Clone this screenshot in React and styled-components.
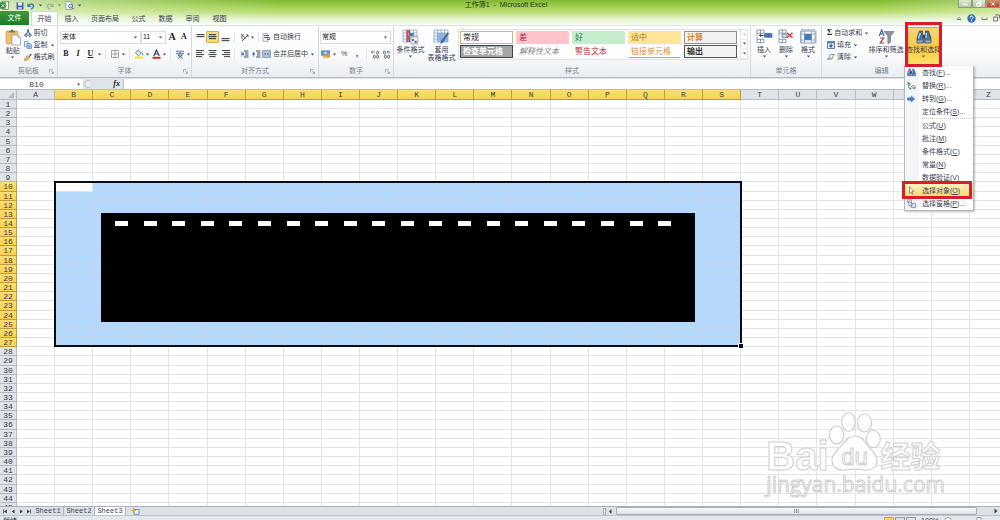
import React from 'react';
import styled, { createGlobalStyle } from 'styled-components';

const COLUMNS = 'ABCDEFGHIJKLMNOPQRSTUVWXYZ'.split('');
const ROWS = Array.from({ length: 45 }, (_, i) => i + 1);
const MARKS = Array.from({ length: 20 }, (_, i) => i);

const isColSelected = (index) => index >= 1 && index <= 18;
const isRowSelected = (row) => row >= 10 && row <= 27;

const GlobalStyle = createGlobalStyle`
  * { box-sizing: border-box; }
  body {
    margin: 0;
    overflow: hidden;
    background: white;
  }
  body, button, input, select {
    font-family: "Liberation Sans", "Noto Sans CJK SC", sans-serif;
    font-size: 7px;
    line-height: 8px;
    color: #3c4350;
  }
  button {
    border: 0;
    padding: 0;
    background: none;
    cursor: pointer;
  }
  svg { display: block; flex: none; }
`;

const Page = styled.div`
  display: flex;
  flex-direction: column;
  height: 100vh;
  overflow: hidden;
`;

const Chrome = styled.header`
  background:
    linear-gradient(90deg, rgba(255, 255, 255, 0.6) 0%, rgba(255, 255, 255, 0.35) 10%, rgba(255, 255, 255, 0) 28%, rgba(255, 255, 255, 0) 88%, rgba(255, 255, 255, 0.35) 100%),
    linear-gradient(180deg, #80b734 0%, #92c744 16%, #a9d45a 34%, #bfe07f 52%, #e3f2cb 74%, #fafdf6 100%);
`;

const TitleBar = styled.div`
  display: grid;
  grid-template-columns: 1fr auto 1fr;
  height: 11px;
`;

const QuickAccess = styled.div`
  display: flex;
  align-items: center;
  gap: 3px;
`;

const Title = styled.h1`
  margin: 0;
  padding-left: 12px;
  font-size: 7px;
  line-height: 10px;
  font-weight: 400;
  color: #26321a;
  white-space: pre;
`;

const WindowButtons = styled.div`
  display: flex;
  justify-content: flex-end;
  align-items: flex-start;
`;

const WindowButton = styled.button`
  width: 14px;
  height: 8px;
  display: flex;
  align-items: center;
  justify-content: center;
  border: 1px solid #8c9c86;
  border-top: 0;
  background: ${(p) => (p.$close ? 'linear-gradient(#e08a6c, #c63d20)' : 'linear-gradient(#dce9cd, #b5c6a6)')};
`;

const TabBar = styled.nav`
  display: flex;
  align-items: stretch;
  height: 14px;
`;

const FileTab = styled.button`
  width: 29px;
  border-radius: 0 2px 0 0;
  color: white;
  background: linear-gradient(#3e9a3b, #1c7a28);
`;

const Tab = styled.button`
  min-width: ${(p) => p.$width || 27}px;
  text-align: center;
  border: 1px solid ${(p) => (p.$active ? '#cfd8d4' : 'transparent')};
  border-bottom: 0;
  border-radius: 2px 2px 0 0;
  background: ${(p) => (p.$active ? 'white' : 'transparent')};
  ${(p) => p.$active && 'margin-left: 2px;'}
`;

const TabTools = styled.div`
  display: flex;
  align-items: center;
  gap: 5px;
  margin-left: auto;
`;

const Ribbon = styled.section`
  position: relative;
  z-index: 3;
  display: flex;
  height: 53px;
  background: linear-gradient(#ffffff 0%, #fafbfc 55%, #e9edf1 100%);
  border-top: 1px solid #dde3e6;
  border-bottom: 1px solid #b3bac2;
`;

const GroupBox = styled.div`
  flex: none;
  display: flex;
  flex-direction: column;
  width: ${(p) => p.$width}px;
  padding-top: 1px;
  border-right: 1px solid #d3d9e0;
`;

const GroupBody = styled.div`
  flex: 1;
  display: flex;
  align-items: flex-start;
  padding: 0 ${(p) => p.$pad || 2}px;
`;

const GroupLabel = styled.div`
  position: relative;
  height: 11px;
  line-height: 10px;
  text-align: center;
  color: #79828f;
`;

const Launcher = styled.svg`
  position: absolute;
  right: 3px;
  top: 3px;
`;

const BigButton = styled.button`
  display: flex;
  flex-direction: column;
  align-items: center;
  gap: 1px;
  width: ${(p) => p.$width}px;
  height: 39px;
  padding-top: 2px;
  white-space: nowrap;
  border-radius: 2px;
  ${(p) => p.$active && 'background: linear-gradient(#f7d777, #fbc93f 55%, #ffe26c); border: 1px solid #d3a442; padding-top: 1px;'}
`;

const Stack = styled.div`
  display: flex;
  flex-direction: column;
  gap: ${(p) => p.$gap || 0}px;
  padding-top: ${(p) => p.$top || 0}px;
  width: ${(p) => p.$width}px;
`;

const Line = styled.div`
  display: flex;
  align-items: center;
  height: 14px;
`;

const SmallButton = styled.button`
  display: flex;
  align-items: center;
  gap: 2px;
  height: 12px;
  white-space: nowrap;
`;

const ToolButton = styled.button`
  display: flex;
  align-items: center;
  justify-content: center;
  width: ${(p) => p.$width || 12}px;
  height: 12px;
  border: 1px solid ${(p) => (p.$active ? '#d6ab48' : 'transparent')};
  border-radius: 1px;
  background: ${(p) => (p.$active ? '#fbdb73' : 'none')};
`;

const Glyph = styled.span`
  font-family: "Liberation Serif", serif;
  font-size: ${(p) => p.$size || 8}px;
  line-height: 10px;
  font-weight: 700;
  font-style: ${(p) => (p.$italic ? 'italic' : 'normal')};
  text-decoration: ${(p) => (p.$underline ? 'underline' : 'none')};
  color: #222;
`;

const Divider = styled.span`
  width: 1px;
  height: 10px;
  margin: 0 ${(p) => (p.$tight ? 0 : 3)}px;
  background: #e0e3e8;
`;

const Picker = styled.div`
  display: flex;
  align-items: center;
  width: ${(p) => p.$width}px;
  height: 13px;
  padding-right: 2px;
  border: 1px solid #d8dde4;
  background: white;

  select {
    flex: 1;
    min-width: 0;
    appearance: none;
    border: 0;
    padding: 0 1px;
    background: none;
    color: #222;
  }
`;

const Gallery = styled.div`
  display: flex;
  margin-top: 2px;
  border: 1px solid #dfe3e8;
  background: white;
`;

const StyleGrid = styled.div`
  display: grid;
  grid-template-columns: repeat(5, 53px);
  grid-auto-rows: 13px;
  gap: 1px 3px;
  padding: 1px 3px 1px 1px;
`;

const StyleCell = styled.button`
  padding: 0 2px;
  font-size: 8px;
  line-height: 10px;
  text-align: left;
  white-space: nowrap;
  overflow: hidden;
  color: ${(p) => p.$color};
  background: ${(p) => p.$bg || 'white'};
  border: ${(p) => p.$border || '1px solid transparent'};
  border-bottom: ${(p) => p.$underline};
  font-weight: ${(p) => (p.$bold ? 700 : 400)};
  font-style: ${(p) => (p.$italic ? 'italic' : 'normal')};
`;

const GalleryScroll = styled.div`
  display: grid;
  grid-template-rows: repeat(3, 1fr);
  width: 7px;

  button {
    display: flex;
    align-items: center;
    justify-content: center;
    border-left: 1px solid #dfe3e8;
    border-bottom: 1px solid #e6e9ed;
  }
`;

const FindWrap = styled.div`
  position: relative;
  margin-left: 4px;
`;

const RedFrame = styled.span`
  position: absolute;
  inset: ${(p) => p.$inset};
  border: 3px solid #d81e2a;
  pointer-events: none;
`;

const Menu = styled.div`
  position: absolute;
  top: 39px;
  left: -3px;
  width: 70px;
  border: 1px solid #b4b8be;
  border-top: 0;
  background: linear-gradient(90deg, #f4f5f7 0, #f4f5f7 14px, white 14px);
  box-shadow: 1px 1px 2px rgba(0, 0, 0, 0.25);
`;

const MenuItem = styled.button`
  position: relative;
  display: grid;
  grid-template-columns: 17px 1fr;
  align-items: center;
  width: 100%;
  height: 13px;
  text-align: left;
  white-space: nowrap;
  background: ${(p) => (p.$active ? 'linear-gradient(#fdf0bd, #f9d875)' : 'none')};

  svg { margin-left: 2px; }
`;

const MenuRule = styled.div`
  height: 1px;
  margin-left: 17px;
  border-top: 1px dotted #c9ccd0;
`;

const FormulaBar = styled.div`
  display: flex;
  align-items: center;
  height: 12px;
  padding-top: 1px;
  background: #dfe4ea;
  border-bottom: 1px solid #b4bcc6;

  input {
    height: 10px;
    border: 0;
    padding: 0;
    background: white;
    outline: 0;
  }
`;

const NameInput = styled.input`
  width: 73px;
  text-align: center;
  font-family: "Liberation Mono", monospace;
  font-size: 8px;
`;

const NameArrow = styled.button`
  display: flex;
  align-items: center;
  justify-content: center;
  width: 10px;
  height: 10px;
  background: white;
`;

const FunctionArea = styled.div`
  display: flex;
  align-items: center;
  justify-content: space-between;
  width: 41px;
  height: 10px;
  padding: 0 3px 0 1px;
  border-right: 1px solid #b9c0c9;
`;

const FormulaInput = styled.input`
  flex: 1;
`;

const GridArea = styled.main`
  position: relative;
  flex: 1;
  min-height: 0;
  overflow: hidden;
`;

/* 26 equal columns, the last one runs slightly past the window edge */
const Sheet = styled.table`
  display: block;
  width: calc(100% + 8px);
  font-family: "Liberation Mono", monospace;
  font-size: 8px;
  line-height: 9px;

  thead, tbody { display: grid; }
  tbody {
    height: 412px;
    grid-template-rows: repeat(45, minmax(0, 1fr));
  }
  tr {
    display: grid;
    grid-template-columns: 17px repeat(26, minmax(0, 1fr));
  }
  thead tr { height: 10px; }
  th, td { padding: 0; overflow: hidden; }
`;

const HeadCell = styled.th`
  font-weight: 400;
  color: #3b4048;
  background: ${(p) => (p.$selected ? 'linear-gradient(#fbdf72, #f8d254)' : '#dfe3e8')};
  border-right: 1px solid ${(p) => (p.$selected ? '#c79a35' : '#b3bac3')};
  border-bottom: 1px solid ${(p) => (p.$selected ? '#c79a35' : '#b3bac3')};
`;

const Cell = styled.td`
  border-right: 1px solid ${(p) => (p.$selected ? '#c3d7ea' : '#e2e4e7')};
  border-bottom: 1px solid ${(p) => (p.$selected ? '#c3d7ea' : '#e2e4e7')};
  background: ${(p) => (p.$selected ? '#b5d9fe' : 'white')};
`;

const Overlay = styled.div`
  position: absolute;
  top: 10px;
  left: 0;
  display: grid;
  width: calc(100% + 8px);
  height: 412px;
  grid-template-columns: 17px repeat(26, minmax(0, 1fr));
  grid-template-rows: repeat(45, minmax(0, 1fr));
  pointer-events: none;
`;

const Selection = styled.div`
  position: relative;
  grid-column: 3 / 21;
  grid-row: 10 / 28;
  margin: -1px -1px 0 -1px;
  border: 2px solid #0b0d10;

  &::after {
    content: '';
    position: absolute;
    right: -3px;
    bottom: -3px;
    width: 4px;
    height: 4px;
    border: solid white;
    border-width: 1px 0 0 1px;
    background: #0b0d10;
  }
`;

const Shape = styled.div`
  position: absolute;
  left: 45px;
  right: 45px;
  top: 30px;
  bottom: 23px;
  display: flex;
  justify-content: space-between;
  align-items: flex-start;
  padding: 8px 24px 0 14px;
  background: black;
`;

const Mark = styled.span`
  width: 13px;
  height: 5px;
  background: white;
`;

const Watermark = styled.div`
  position: absolute;
  right: 55px;
  bottom: 8px;
  font-weight: 700;
  color: white;
  -webkit-text-stroke: 1px #cfcfcf;
  pointer-events: none;
`;

const MarkTop = styled.div`
  display: flex;
  align-items: flex-end;
  height: 60px;
  font-size: 40px;
  line-height: 30px;
`;

const Paw = styled.div`
  position: relative;
  display: flex;
  justify-content: center;
  width: 52px;
  height: 60px;
  font-size: 24px;
  line-height: 24px;

  svg { position: absolute; inset: 0; }
  span { position: relative; margin-top: 34px; font-weight: 400; }
`;

const Cjk = styled.span`
  font-family: "Noto Sans CJK SC", sans-serif;
  font-size: 30px;
  line-height: 34px;
`;

const MarkUrl = styled.div`
  font-family: "Open Sans", sans-serif;
  font-size: 21px;
  line-height: 27px;
  font-weight: 400;
`;

const SheetBar = styled.footer`
  display: flex;
  align-items: stretch;
  height: 9px;
  border-top: 1px solid #aab1ba;
  background: #dce1e7;
`;

const SheetNav = styled.div`
  display: flex;
  align-items: center;
  justify-content: space-around;
  width: 33px;
`;

const SheetTab = styled.button`
  width: 31px;
  line-height: 7px;
  font-family: "Liberation Mono", monospace;
  border-right: 1px solid #aab1ba;
  background: ${(p) => (p.$active ? 'white' : 'transparent')};
`;

const NewSheet = styled.button`
  display: flex;
  align-items: center;
  padding: 0 5px;
`;

const Scroll = styled.div`
  display: flex;
  align-items: center;
  flex: none;
  width: 40%;
  margin-left: auto;
  gap: 4px;
  padding: 0 2px 0 3px;
`;

const Thumb = styled.div`
  flex: 1;
  height: 8px;
  margin-right: 13px;
  display: flex;
  align-items: center;
  justify-content: center;
  border: 1px solid #a8afb9;
  border-radius: 1px;
  background: linear-gradient(#f7f8fa, #dde1e6);
`;

const Status = styled.div`
  display: flex;
  justify-content: space-between;
  height: 5px;
  padding: 1px 4px 0 3px;
  overflow: hidden;
  background: #e4e8ec;
  border-top: 1px solid #bcc3cb;
`;

const StatusRight = styled.div`
  display: flex;
  gap: 5px;
`;

const Views = styled.div`
  display: flex;
  gap: 1px;
`;

const ViewButton = styled.button`
  width: 10px;
  height: 8px;
  border: 1px solid ${(p) => (p.$active ? '#cfa43c' : '#949ba5')};
  background: ${(p) => (p.$active ? '#f9d55d' : '#dfe3e8')};
`;

const Arrow = ({ color = '#555' }) => (
  <svg width="5" height="3" viewBox="0 0 5 3"><path d="M.8.4h3.4L2.5 2.5z" fill={color} /></svg>
);

const Bars = ({ widths, top = 1 }) => (
  <svg width="9" height="10" viewBox="0 0 9 10">
    {widths.map((w, i) => (
      <rect key={i} x={(9 - w) / 2} y={top + i * 2} width={w} height="1.2" fill="#4a4f57" />
    ))}
  </svg>
);

const AlignIcon = ({ side }) => (
  <svg width="9" height="10" viewBox="0 0 9 10" fill="#4a4f57">
    {[8, 6, 8, 6].map((w, i) => (
      <rect key={i} x={side === 'left' ? 0 : side === 'right' ? 9 - w : (9 - w) / 2} y={1 + i * 2} width={w} height="1.1" />
    ))}
  </svg>
);

const PasteIcon = () => (
  <svg width="16" height="17" viewBox="0 0 16 17">
    <rect x="1" y="2" width="12" height="13" rx="1" fill="#edc06a" stroke="#c99547" strokeWidth=".6" />
    <path d="M4 3.5V2h1.5L6 .6h2L8.6 2H10v1.5z" fill="#6f7780" />
    <path d="M7 6h6l2.5 2.5V16H7z" fill="#f7f9fc" stroke="#8795ac" strokeWidth=".7" />
    <path d="M13 6v2.5h2.5" fill="none" stroke="#8795ac" strokeWidth=".6" />
  </svg>
);

const CutIcon = () => (
  <svg width="8" height="8" viewBox="0 0 8 8" fill="none" stroke="#2f5487" strokeWidth="1">
    <path d="M4.6.4 2.6 5M3.6.4l2 4.6" /><circle cx="2" cy="6.2" r="1.2" /><circle cx="6" cy="6.2" r="1.2" />
  </svg>
);

const CopyIcon = () => (
  <svg width="8" height="8" viewBox="0 0 8 8" stroke="#5682b6" strokeWidth=".7">
    <path d="M.5.6h3l1 1v4h-4z" fill="#e8f1fb" /><path d="M3 2.6h3.3l1.2 1.2v3.7H3z" fill="#b8d2ee" /><path d="M4 4.8h2.4M4 6.1h2.4" />
  </svg>
);

const BrushIcon = () => (
  <svg width="8" height="8" viewBox="0 0 8 8">
    <path d="M4.4 3.5 7 .6l.8.8-2.6 2.8z" fill="#4a4c52" /><path d="m3.3 2.7 2.4 2.2-2 2.2L.3 7.5l.5-1.7z" fill="#eeb94b" stroke="#99712b" strokeWidth=".5" />
  </svg>
);

const SaveIcon = () => (
  <svg width="8" height="8" viewBox="0 0 8 8"><path d="M.5.5h7v7h-7z" fill="#3f62a4" /><path d="M2 .5h4v3H2z" fill="#e6eefa" /><path d="M2.2 5h3.6v2.5H2.2z" fill="#b8c5da" /></svg>
);

const UndoIcon = ({ flip, color = '#3674bd' }) => (
  <svg width="8" height="8" viewBox="0 0 8 8"><g transform={flip ? 'matrix(-1 0 0 1 8 0)' : undefined}><path d="M2 3.5C4 .9 7 2 6.4 4.6 6.1 6 5 6.7 4 7" fill="none" stroke={color} strokeWidth="1.4" /><path d="M.4 1.3v3.8h3.9z" fill={color} /></g></svg>
);

const PreviewIcon = () => (
  <svg width="9" height="9" viewBox="0 0 9 9"><path d="M1 .5h4l2 2v6H1z" fill="#fff" stroke="#68768a" strokeWidth=".6" /><circle cx="5.5" cy="5" r="2" fill="#cce4f5" stroke="#355d8b" strokeWidth=".8" /><path d="m7 6.5 1.6 1.8" stroke="#355d8b" /></svg>
);

const ExcelIcon = () => (
  <svg width="9" height="9" viewBox="0 0 9 9"><rect x="2.5" y=".5" width="6" height="8" fill="#f2f8ee" stroke="#4a9148" strokeWidth=".7" /><path d="M0 1.4h5.8v6.2H0z" fill="#26823a" /><path d="m1.2 2.8 3.4 3.6m0-3.6L1.2 6.4" stroke="#fff" strokeWidth=".9" /></svg>
);

const BorderIcon = () => (
  <svg width="8" height="8" viewBox="0 0 8 8" fill="none" stroke="#8a9099" strokeWidth=".8"><path d="M.5.5h7v7h-7zM4 .5v7M.5 4h7" /></svg>
);

const FillIcon = () => (
  <svg width="10" height="10" viewBox="0 0 10 10"><path d="m4 1 3.5 3L4.4 6.8 1.5 4z" fill="#dbe5f1" stroke="#4b5d78" strokeWidth=".7" /><path d="M7.5 3.5c1 .6 1.6 1.8 1.2 3" fill="none" stroke="#3472ba" /><path d="M.5 7.5h9v2h-9z" fill="#f9e52c" /></svg>
);

const PhoneticIcon = () => (
  <svg width="10" height="9" viewBox="0 0 10 9" fill="none"><path d="M1 1.2h3M6 1.2h3M1 3.3h8M5 .5v3M2.5 5h5L3 8.5M3 5l4.8 3.4" stroke="#3b5c91" strokeWidth=".9" /></svg>
);

const OrientIcon = () => (
  <svg width="9" height="9" viewBox="0 0 9 9" fill="none" stroke="#474c55" strokeWidth=".9"><path d="m1 1.5 5 4M1 4.5l3 2.6M3.5 1l-2 3M2 8l6-6M6 2h2v2" /></svg>
);

const IndentIcon = ({ out }) => (
  <svg width="9" height="9" viewBox="0 0 9 9"><path d="M4 1h4.5M5 3h3.5M5 5h3.5M4 7h4.5" stroke="#454b55" /><path d={out ? 'M3.8 2.2 1 4l2.8 1.8z' : 'M.6 2.2 3.5 4 .6 5.8z'} fill="#346db1" /><path d="M1.8 1v6" stroke="#346db1" strokeWidth=".6" /></svg>
);

const WrapIcon = () => (
  <svg width="9" height="9" viewBox="0 0 9 9" fill="none"><path d="M1 .6h4.8v7.8H1z" fill="#eef2f7" stroke="#7d8794" strokeWidth=".6" /><path d="M2 2.5h5M2 4.5h5.5v2H5" stroke="#4f5d71" strokeWidth=".9" /></svg>
);

const MergeIcon = () => (
  <svg width="9" height="8" viewBox="0 0 9 8"><path d="M.5.5h8v7h-8z" fill="#d3e2f4" stroke="#6684aa" strokeWidth=".7" /><path d="M.5 2h8M.5 6h8" stroke="#6684aa" strokeWidth=".6" /><path d="M1.3 4h2.3M5.4 4h2.3M2.8 3.1 3.9 4l-1.1.9M6.2 3.1 5.1 4l1.1.9" fill="none" stroke="#244a81" strokeWidth=".7" /></svg>
);

const MoneyIcon = () => (
  <svg width="10" height="9" viewBox="0 0 10 9"><path d="M.5.8h8v4.5h-8z" fill="#779bc9" stroke="#335b90" strokeWidth=".6" /><circle cx="4.5" cy="3" r="1.2" fill="#dbe6f4" /><ellipse cx="4" cy="7" rx="2.3" ry="1.4" fill="#edbd50" /><ellipse cx="7.5" cy="6" rx="1.8" ry="2" fill="#dca437" /></svg>
);

const DecimalIcon = ({ less }) => (
  <svg width="9" height="9" viewBox="0 0 9 9" fill="none"><path d={less ? 'M8.5 2H5.4m1.1-1.2L5.2 2l1.3 1.2' : 'M.5 2h3.2M1.7.8.4 2l1.3 1.2'} stroke="#3a6fb2" strokeWidth=".9" /><ellipse cx={less ? 2.4 : 6.6} cy="2.6" rx="1" ry="1.5" stroke="#444" strokeWidth=".8" /><ellipse cx="3.4" cy="6.7" rx="1" ry="1.5" stroke="#444" strokeWidth=".8" /><ellipse cx="6.6" cy="6.7" rx="1" ry="1.5" stroke="#444" strokeWidth=".8" /></svg>
);

const GridBase = () => (
  <g><path d="M1 1h14v12H1z" fill="#f7faff" /><path d="M1 1h14v12H1zM1 4h14M1 7h14M1 10h14M4.5 1v12M8 1v12M11.5 1v12" fill="none" stroke="#7f9cc4" strokeWidth=".7" /></g>
);

const ConditionIcon = () => (
  <svg width="17" height="16" viewBox="0 0 17 16"><GridBase /><path d="M4.5 1H8v3H4.5zM4.5 7H8v3H4.5zM4.5 4h2v9h-2z" fill="#d94850" /><path d="M7 4h4.5v3H7zM6.5 10H8v3H6.5z" fill="#4676bd" /><path d="M9 8h7v7H9z" fill="#edf1f6" stroke="#6d7685" strokeWidth=".5" /><path d="m10 10 2 1-2 1m2.5 1.7h2.4m-2.4-1.4h2.4" fill="none" stroke="#333" strokeWidth=".8" /></svg>
);

const TableIcon = () => (
  <svg width="17" height="16" viewBox="0 0 17 16"><GridBase /><path d="M4.5 4H15v9H4.5z" fill="#75a5dc" opacity=".75" /><path d="m9.8 9.8 5-6.2 1.2 1-4.6 6.3z" fill="#555e6c" /><path d="M10 9.6 11.7 11c-.8 2.5-2.5 3.4-4.9 3.4 1.6-1 1-3.4 3.2-4.8z" fill="#3c6caf" /></svg>
);

const CellsIcon = ({ kind }) => (
  <svg width="17" height="16" viewBox="0 0 17 16">
    {kind === 'format' ? (
      <g><path d="M1 2h14v12H1z" fill="#fff" stroke="#5b7fae" strokeWidth=".8" /><path d="M1 5h14M1 11h14M4.5 2v12M11.5 2v12" stroke="#7f9cc4" strokeWidth=".8" /><path d="M4.5 5h7v6h-7z" fill="#4977c0" /><path d="M1 .8h14M.3 2v12M16 2v12" stroke="#87a0bf" strokeWidth=".8" /></g>
    ) : (
      <g><path d="M1 1h7v3.2H1zM4.5 1v3.2M1 10.3h7v3.4H1zM4.5 10.3v3.4M1 4.2V7M1 7.8v2.5" fill="#fff" stroke="#71859f" strokeWidth=".8" />
        {kind === 'insert' ? <g><path d="M8.5 4.5H16v3.8H8.5zM12.3 4.5v3.8" fill="#4777bf" stroke="#2d579a" strokeWidth=".6" /><path d="M7.8 6.4H3.6m1.6-1.6L3.4 6.4l1.8 1.6" fill="none" stroke="#222" strokeWidth=".9" /></g>
          : <g><path d="M4 5h5v3.4H4z" fill="#c8d7ea" stroke="#54739e" strokeWidth=".7" /><path d="m9 3.7 5.5 5m0-5-5.5 5" stroke="#d83b31" strokeWidth="1.5" /></g>}
      </g>
    )}
  </svg>
);

const SortIcon = () => (
  <svg width="17" height="16" viewBox="0 0 17 16"><path d="M1.3 7 3.7.8 6 7M2.2 5h3" fill="none" stroke="#3e66a3" strokeWidth="1.2" /><path d="M2.2 9h3.5L2.2 14h4" fill="none" stroke="#a93b42" strokeWidth="1.2" /><path d="M6.2 2.5h10L12.6 7v6.2l-2.7 1.5V7z" fill="#8c939b" stroke="#646b74" strokeWidth=".6" /></svg>
);

const FindIcon = ({ size = 16 }) => (
  <svg width={size} height={size} viewBox="0 0 16 16"><path d="M3.5 2h3v3l.8 1v8H1V9z" fill="#4b7196" stroke="#233f62" strokeWidth=".7" /><path d="M12.5 2h-3v3l-.8 1v8H15V9z" fill="#4b7196" stroke="#233f62" strokeWidth=".7" /><path d="M6.8 6h2.4v3.5H6.8z" fill="#294868" /><path d="M2.4 9.2 4.3 4M10.4 4l-.4 5" stroke="#b9d4ed" strokeWidth="1.3" /><path d="M1.5 11.5h5.2v2H1.5zM9.3 11.5h5.2v2H9.3z" fill="#8bb0d2" /></svg>
);

const ReplaceIcon = () => (
  <svg width="9" height="9" viewBox="0 0 9 9" fill="none"><path d="M1 .8v3.4h2V2.3H1M4.5 6.2c0-2.2 3.4-2.2 3.4 0v2M5 7h3" stroke="#4b5a6f" strokeWidth=".8" /><path d="M1.5 5.2c0 2 1 2.4 2.5 2.4M3 6.5l1.2 1L3 8.7" stroke="#3b9144" strokeWidth=".9" /></svg>
);

const GoIcon = () => (
  <svg width="8" height="8" viewBox="0 0 8 8"><path d="M.5 2.8h3.7V.9L7.8 4 4.2 7V5.2H.5z" fill="#3f83d2" stroke="#245b9e" strokeWidth=".4" /></svg>
);

const CursorIcon = () => (
  <svg width="9" height="9" viewBox="0 0 9 9"><path d="M2.5.7v6.5L4 5.8l1 2.4 1-.4-1-2.4h2z" fill="#fff" stroke="#555" strokeWidth=".6" /></svg>
);

const PaneIcon = () => (
  <svg width="9" height="9" viewBox="0 0 9 9"><path d="M.6.7h4v3h-4zM4.5 4.5h4v4h-4z" fill="#d8e3f0" stroke="#5c7190" strokeWidth=".6" /><path d="M2 2.2v5l1.2-1 .9 1.8.8-.4-.9-1.8h1.5z" fill="#fff" stroke="#555" strokeWidth=".5" /></svg>
);

const FillDownIcon = () => (
  <svg width="8" height="8" viewBox="0 0 8 8"><path d="M.5.5h7v7h-7z" fill="#dae7f6" stroke="#3a659f" strokeWidth=".8" /><path d="M.5.5h7v1.8h-7z" fill="#5584c0" /><path d="M4 2.7v2.8M2.5 4.3 4 6l1.5-1.7" fill="none" stroke="#1f529c" strokeWidth="1.1" /></svg>
);

const EraserIcon = () => (
  <svg width="8" height="8" viewBox="0 0 8 8"><path d="m3.4 1.6 4-.2-2.8 4.7-4 .2z" fill="#fff" stroke="#52627b" strokeWidth=".7" /><path d="m.6 6.3 1-1.8 3.8-.1-.8 1.7z" fill="#9bb4d6" /></svg>
);

const HelpIcon = () => (
  <svg width="9" height="9" viewBox="0 0 9 9"><circle cx="4.5" cy="4.5" r="4.2" fill="#3572bd" /><path d="M3 3.5C3 1.6 6 1.7 6 3.4c0 1-1.4 1-1.4 2M4.6 6.4v1" fill="none" stroke="#fff" strokeWidth="1" /></svg>
);

const styles = [
  { name: '常规', color: '#222', border: '1px solid #d7b75b' },
  { name: '差', color: '#9c2637', bg: '#ffc3cc' },
  { name: '好', color: '#2d7a3b', bg: '#c5edcc' },
  { name: '适中', color: '#a2731c', bg: '#ffe597' },
  { name: '计算', color: '#e27c1c', bg: '#f2f2f2', border: '1px solid #8e8e8e', bold: true },
  { name: '检查单元格', color: 'white', bg: '#a5a5a5', border: '1px solid #444', bold: true },
  { name: '解释性文本', color: '#858585', italic: true },
  { name: '警告文本', color: '#b8292f' },
  { name: '链接单元格', color: '#dd9345', underline: '1px solid #dda052' },
  { name: '输出', color: '#333', bg: '#f2f2f2', border: '1px solid #555', bold: true },
];

const menuItems = [
  { label: '查找', hotkey: 'F', more: true, icon: <FindIcon size={9} /> },
  { label: '替换', hotkey: 'R', more: true, icon: <ReplaceIcon /> },
  { label: '转到', hotkey: 'G', more: true, icon: <GoIcon /> },
  { label: '定位条件', hotkey: 'S', more: true, ruleAfter: true },
  { label: '公式', hotkey: 'U' },
  { label: '批注', hotkey: 'M' },
  { label: '条件格式', hotkey: 'C' },
  { label: '常量', hotkey: 'N' },
  { label: '数据验证', hotkey: 'V' },
  { label: '选择对象', hotkey: 'O', icon: <CursorIcon />, active: true },
  { label: '选择窗格', hotkey: 'P', more: true, icon: <PaneIcon /> },
];

const Group = ({ label, width, pad, launcher, children }) => (
  <GroupBox $width={width}>
    <GroupBody $pad={pad}>{children}</GroupBody>
    <GroupLabel>
      {label}
      {launcher && (
        <Launcher width="5" height="5" viewBox="0 0 5 5" fill="none" stroke="#8d95a0" strokeWidth=".7"><path d="M.5 3.5v-3h3M2 2l2.4 2.4M4.5 2.5v2h-2" /></Launcher>
      )}
    </GroupLabel>
  </GroupBox>
);

const Select = ({ width, label, value }) => (
  <Picker $width={width}>
    <select aria-label={label} defaultValue={value}>
      <option>{value}</option>
    </select>
    <Arrow />
  </Picker>
);

const Big = ({ icon, width, children, ...rest }) => (
  <BigButton $width={width} {...rest}>{icon}<span>{children}</span><Arrow /></BigButton>
);

const FindMenu = () => (
  <Menu>
    {menuItems.map((item) => (
      <React.Fragment key={item.label}>
        <MenuItem $active={item.active}>
          <span>{item.icon}</span>
          <span>{item.label}(<u>{item.hotkey}</u>){item.more && '...'}</span>
          {item.active && <RedFrame $inset="-3px 1px -2px -3px" />}
        </MenuItem>
        {item.ruleAfter && <MenuRule />}
      </React.Fragment>
    ))}
  </Menu>
);

const RibbonPanel = () => (
  <Ribbon>
    <Group label="剪贴板" width={58} launcher>
      <Big icon={<PasteIcon />} width={22}>粘贴</Big>
      <Stack $width={32}>
        <SmallButton><CutIcon />剪切</SmallButton>
        <SmallButton><CopyIcon />复制<Arrow /></SmallButton>
        <SmallButton><BrushIcon />格式刷</SmallButton>
      </Stack>
    </Group>

    <Group label="字体" width={134} launcher>
      <Stack $gap={3} $top={3}>
        <Line>
          <Select width={81} label="字体" value="宋体" />
          <Select width={25} label="字号" value="11" />
          <ToolButton><Glyph $size={10}>A</Glyph></ToolButton>
          <ToolButton><Glyph>A</Glyph></ToolButton>
        </Line>
        <Line>
          <ToolButton><Glyph>B</Glyph></ToolButton>
          <ToolButton><Glyph $italic>I</Glyph></ToolButton>
          <ToolButton $width={13}><Glyph $underline>U</Glyph></ToolButton>
          <Arrow /><Divider />
          <ToolButton aria-label="边框"><BorderIcon /></ToolButton>
          <Arrow /><Divider />
          <ToolButton aria-label="填充颜色"><FillIcon /></ToolButton>
          <Arrow />
          <ToolButton aria-label="字体颜色">
            <svg width="9" height="10" viewBox="0 0 9 10"><path d="m1.8 7 2.7-6 2.7 6M2.8 5h3.4" fill="none" stroke="#33435e" strokeWidth="1.2" /><path d="M.5 7.8h8v2h-8z" fill="#d92b2b" /></svg>
          </ToolButton>
          <Arrow /><Divider />
          <ToolButton aria-label="拼音"><PhoneticIcon /></ToolButton>
          <Arrow />
        </Line>
      </Stack>
    </Group>

    <Group label="对齐方式" width={127} launcher>
      <Stack $gap={3} $top={3}>
        <Line>
          <ToolButton aria-label="顶端对齐"><Bars widths={[8, 8]} top={2} /></ToolButton>
          <ToolButton aria-label="垂直居中" $width={13} $active><Bars widths={[7, 8, 7]} top={2} /></ToolButton>
          <ToolButton aria-label="底端对齐"><Bars widths={[8, 8]} top={6} /></ToolButton>
          <Divider />
          <ToolButton aria-label="方向"><OrientIcon /></ToolButton>
          <Arrow />
          <Divider />
          <SmallButton><WrapIcon />自动换行</SmallButton>
        </Line>
        <Line>
          <ToolButton aria-label="左对齐"><AlignIcon side="left" /></ToolButton>
          <ToolButton aria-label="居中" $width={13}><AlignIcon side="center" /></ToolButton>
          <ToolButton aria-label="右对齐"><AlignIcon side="right" /></ToolButton>
          <Divider />
          <ToolButton aria-label="减少缩进"><IndentIcon out /></ToolButton>
          <ToolButton aria-label="增加缩进"><IndentIcon /></ToolButton>
          <SmallButton><MergeIcon />合并后居中<Arrow /></SmallButton>
        </Line>
      </Stack>
    </Group>

    <Group label="数字" width={75} pad={1} launcher>
      <Stack $gap={3} $top={3}>
        <Line><Select width={71} label="数字格式" value="常规" /></Line>
        <Line>
          <ToolButton aria-label="会计数字格式"><MoneyIcon /></ToolButton>
          <Arrow />
          <ToolButton $width={14}>%</ToolButton>
          <ToolButton><Glyph>,</Glyph></ToolButton>
          <Divider />
          <ToolButton aria-label="增加小数位数" $width={11}><DecimalIcon /></ToolButton>
          <ToolButton aria-label="减少小数位数" $width={11}><DecimalIcon less /></ToolButton>
        </Line>
      </Stack>
    </Group>

    <Group label="样式" width={357}>
      <Big icon={<ConditionIcon />} width={29}>条件格式</Big>
      <BigButton $width={33}>
        <TableIcon />
        <span>套用<br />表格格式</span>
      </BigButton>
      <Gallery>
        <StyleGrid>
          {styles.map((s) => (
            <StyleCell
              key={s.name}
              $color={s.color}
              $bg={s.bg}
              $border={s.border}
              $bold={s.bold}
              $italic={s.italic}
              $underline={s.underline}
            >
              {s.name}
            </StyleCell>
          ))}
        </StyleGrid>
        <GalleryScroll>
          <button aria-label="上一行"><Arrow color="#b5bac1" /></button>
          <button aria-label="下一行"><Arrow /></button>
          <button aria-label="其他"><Arrow /></button>
        </GalleryScroll>
      </Gallery>
    </Group>

    <Group label="单元格" width={71}>
      <Big icon={<CellsIcon kind="insert" />} width={22}>插入</Big>
      <Big icon={<CellsIcon kind="delete" />} width={22}>删除</Big>
      <Big icon={<CellsIcon kind="format" />} width={22}>格式</Big>
    </Group>

    <Group label="编辑" width={120} pad={5}>
      <Stack $width={42}>
        <SmallButton><Glyph>Σ</Glyph>自动求和<Arrow /></SmallButton>
        <SmallButton><FillDownIcon />填充<Arrow /></SmallButton>
        <SmallButton><EraserIcon />清除<Arrow /></SmallButton>
      </Stack>
      <Big icon={<SortIcon />} width={34}>排序和筛选</Big>
      <FindWrap>
        <Big icon={<FindIcon />} width={33} $active>查找和选择</Big>
        <FindMenu />
        <RedFrame $inset="-5px -2px -1px -2px" />
      </FindWrap>
    </Group>
  </Ribbon>
);

const Worksheet = () => (
  <GridArea>
    <Sheet>
      <thead>
        <tr>
          <HeadCell aria-label="全选">
            <svg width="16" height="9" viewBox="0 0 16 9"><path d="M14 2v6H8z" fill="#b4bbc4" /></svg>
          </HeadCell>
          {COLUMNS.map((c, i) => (
            <HeadCell key={c} scope="col" $selected={isColSelected(i)}>{c}</HeadCell>
          ))}
        </tr>
      </thead>
      <tbody>
        {ROWS.map((row) => (
          <tr key={row}>
            <HeadCell scope="row" $selected={isRowSelected(row)}>{row}</HeadCell>
            {COLUMNS.map((c, i) => (
              <Cell key={c} $selected={isRowSelected(row) && isColSelected(i) && !(row === 10 && i === 1)} />
            ))}
          </tr>
        ))}
      </tbody>
    </Sheet>
    <Overlay>
      <Selection>
        <Shape>{MARKS.map((m) => <Mark key={m} />)}</Shape>
      </Selection>
    </Overlay>
    <Watermark>
      <MarkTop>
        <span>Bai</span>
        <Paw>
          <svg width="52" height="60" viewBox="0 0 52 60" fill="#fff" stroke="#cfcfcf" strokeWidth="1.2">
            <ellipse cx="7.6" cy="24" rx="7" ry="9" />
            <ellipse cx="19.5" cy="11" rx="6.7" ry="9.5" />
            <ellipse cx="35.5" cy="12" rx="7" ry="9" />
            <ellipse cx="44.3" cy="28" rx="7" ry="8.5" />
            <path d="M26 25c6 0 9 4 12 9 4 5 10 8 10 15 0 8-6 11-13 10-5-1-13-1-18 0-7 1-14-2-14-10 0-7 6-10 10-15 4-5 7-9 13-9z" />
          </svg>
          <span>du</span>
        </Paw>
        <Cjk>经验</Cjk>
      </MarkTop>
      <MarkUrl>jingyan.baidu.com</MarkUrl>
    </Watermark>
  </GridArea>
);

const App = () => (
  <>
    <GlobalStyle />
    <Page>
      <Chrome>
        <TitleBar>
          <QuickAccess>
            <ExcelIcon />
            <Divider $tight />
            <SaveIcon />
            <UndoIcon />
            <Arrow />
            <UndoIcon flip color="#9fb59a" />
            <Arrow color="#8fa184" />
            <PreviewIcon />
            <Arrow />
          </QuickAccess>
          <Title>工作簿1  -  Microsoft Excel</Title>
          <WindowButtons>
            <WindowButton aria-label="最小化"><svg width="6" height="5" viewBox="0 0 6 5"><path d="M.5 3.5h5" stroke="#fff" strokeWidth="1.5" /></svg></WindowButton>
            <WindowButton aria-label="还原"><svg width="6" height="6" viewBox="0 0 6 6" fill="none" stroke="#fff"><path d="M2 .8h3v3M.8 2.2h3.4v3H.8z" /></svg></WindowButton>
            <WindowButton aria-label="关闭" $close><svg width="6" height="6" viewBox="0 0 6 6"><path d="m1 1 4 4m0-4L1 5" stroke="#fff" /></svg></WindowButton>
          </WindowButtons>
        </TitleBar>
        <TabBar>
          <FileTab>文件</FileTab>
          <Tab $active>开始</Tab>
          <Tab>插入</Tab>
          <Tab $width={40}>页面布局</Tab>
          <Tab>公式</Tab>
          <Tab>数据</Tab>
          <Tab>审阅</Tab>
          <Tab>视图</Tab>
          <TabTools>
            <svg width="6" height="5" viewBox="0 0 6 5"><path d="M.8 3.5 3 1.4l2.2 2.1z" fill="#fff" stroke="#667" strokeWidth=".8" /></svg>
            <HelpIcon />
            <svg width="7" height="5" viewBox="0 0 7 5"><path d="M1 1.5v2h5v-2" fill="none" stroke="#667" strokeWidth=".9" /></svg>
            <svg width="7" height="8" viewBox="0 0 7 8"><path d="M2.5 1h4v3.5M.7 3h4v4h-4z" fill="none" stroke="#667" strokeWidth=".9" /></svg>
          </TabTools>
        </TabBar>
      </Chrome>

      <RibbonPanel />

      <FormulaBar>
        <NameInput aria-label="名称框" defaultValue="B10" />
        <NameArrow aria-label="名称列表"><Arrow /></NameArrow>
        <FunctionArea>
          <svg width="8" height="8" viewBox="0 0 8 8"><path d="M6 .8A3.5 3.5 0 1 0 6 7" fill="#edf0f4" stroke="#a4acb6" strokeWidth=".8" /></svg>
          <Glyph $italic>fx</Glyph>
        </FunctionArea>
        <FormulaInput aria-label="编辑栏" />
      </FormulaBar>

      <Worksheet />

      <SheetBar>
        <SheetNav>
          <svg width="28" height="5" viewBox="0 0 28 5" fill="#3d4450"><path d="M0 .5h.8v4H0zM3.8.5v4L1 2.5zM11.5.5v4l-2.8-2zM17 .5v4l2.8-2zM24 .5v4l2.8-2zM27 .5h.8v4H27z" /></svg>
        </SheetNav>
        <SheetTab>Sheet1</SheetTab>
        <SheetTab>Sheet2</SheetTab>
        <SheetTab $active>Sheet3</SheetTab>
        <NewSheet aria-label="插入工作表">
          <svg width="9" height="7" viewBox="0 0 9 7"><path d="M3 1.5h5v4.8H3z" fill="#e9effa" stroke="#5a78ad" strokeWidth=".8" /><path d="M2.5 0v5M0 2.5h5" stroke="#e7a832" strokeWidth="1.2" /></svg>
        </NewSheet>
        <Scroll>
          <svg width="9" height="7" viewBox="0 0 9 7"><path d="M.5.5h2v6h-2z" fill="#fff" stroke="#7c838d" strokeWidth=".7" /><path d="M8.5 1v5L6 3.5z" fill="#3d4450" /></svg>
          <Thumb><svg width="5" height="4" viewBox="0 0 5 4"><path d="M.7 0v4M2.5 0v4M4.3 0v4" stroke="#808791" strokeWidth=".8" /></svg></Thumb>
          <svg width="4" height="6" viewBox="0 0 4 6"><path d="M.5.5v5L3.5 3z" fill="#3d4450" /></svg>
        </Scroll>
      </SheetBar>
      <Status>
        <span>就绪</span>
        <StatusRight>
          <Views>
            <ViewButton aria-label="普通" $active />
            <ViewButton aria-label="页面布局" />
            <ViewButton aria-label="分页预览" />
          </Views>
          <span>100%</span>
          <svg width="52" height="8" viewBox="0 0 52 8"><circle cx="4" cy="4" r="3.5" fill="#fff" stroke="#7d858f" strokeWidth=".8" /><path d="M10 4h40" stroke="#9aa1aa" /><path d="M33 .5h4v6h-4z" fill="#fff" stroke="#7d858f" strokeWidth=".8" /></svg>
        </StatusRight>
      </Status>
    </Page>
  </>
);

export default App;
